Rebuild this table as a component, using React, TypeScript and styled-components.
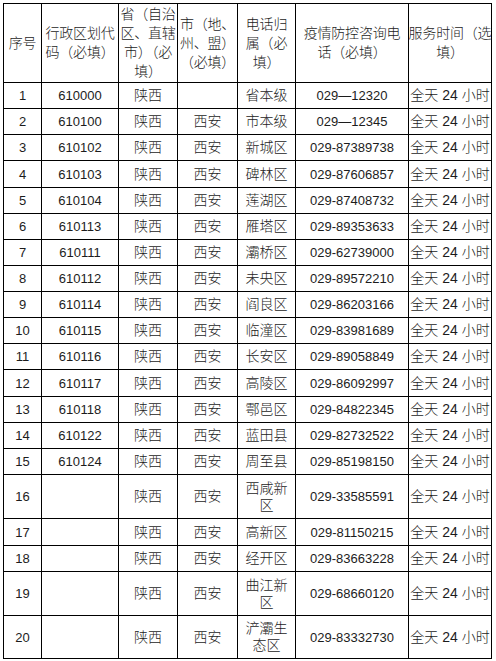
import React from 'react';
import styled, { createGlobalStyle } from 'styled-components';

const GlobalStyle = createGlobalStyle`
  html, body {
    margin: 0;
    padding: 0;
    background: #fff;
  }
  body {
    font-family: "Liberation Sans", "Noto Sans CJK SC", sans-serif;
    font-weight: 300;
    color: #1c1c1c;
  }
`;

// content widths of the seven columns, lines are the 1px gaps
const COLS = [37, 76, 58, 59, 57, 112, 82];

type Row = {
  no: number;
  code: string;
  province: string;
  city: string;
  area: string[];
  phone: string;
};

const rows: Row[] = [
  { no: 1, code: '610000', province: '陕西', city: '', area: ['省本级'], phone: '029—12320' },
  { no: 2, code: '610100', province: '陕西', city: '西安', area: ['市本级'], phone: '029—12345' },
  { no: 3, code: '610102', province: '陕西', city: '西安', area: ['新城区'], phone: '029-87389738' },
  { no: 4, code: '610103', province: '陕西', city: '西安', area: ['碑林区'], phone: '029-87606857' },
  { no: 5, code: '610104', province: '陕西', city: '西安', area: ['莲湖区'], phone: '029-87408732' },
  { no: 6, code: '610113', province: '陕西', city: '西安', area: ['雁塔区'], phone: '029-89353633' },
  { no: 7, code: '610111', province: '陕西', city: '西安', area: ['灞桥区'], phone: '029-62739000' },
  { no: 8, code: '610112', province: '陕西', city: '西安', area: ['未央区'], phone: '029-89572210' },
  { no: 9, code: '610114', province: '陕西', city: '西安', area: ['阎良区'], phone: '029-86203166' },
  { no: 10, code: '610115', province: '陕西', city: '西安', area: ['临潼区'], phone: '029-83981689' },
  { no: 11, code: '610116', province: '陕西', city: '西安', area: ['长安区'], phone: '029-89058849' },
  { no: 12, code: '610117', province: '陕西', city: '西安', area: ['高陵区'], phone: '029-86092997' },
  { no: 13, code: '610118', province: '陕西', city: '西安', area: ['鄠邑区'], phone: '029-84822345' },
  { no: 14, code: '610122', province: '陕西', city: '西安', area: ['蓝田县'], phone: '029-82732522' },
  { no: 15, code: '610124', province: '陕西', city: '西安', area: ['周至县'], phone: '029-85198150' },
  { no: 16, code: '', province: '陕西', city: '西安', area: ['西咸新', '区'], phone: '029-33585591' },
  { no: 17, code: '', province: '陕西', city: '西安', area: ['高新区'], phone: '029-81150215' },
  { no: 18, code: '', province: '陕西', city: '西安', area: ['经开区'], phone: '029-83663228' },
  { no: 19, code: '', province: '陕西', city: '西安', area: ['曲江新', '区'], phone: '029-68660120' },
  { no: 20, code: '', province: '陕西', city: '西安', area: ['浐灞生', '态区'], phone: '029-83332730' },
];

const headers: string[][] = [
  ['序号'],
  ['行政区划代', '码（必填）'],
  ['省（自治', '区、直辖', '市）（必', '填）'],
  ['市（地、', '州、盟）', '（必填）'],
  ['电话归', '属（必', '填）'],
  ['疫情防控咨询电', '话（必填）'],
  ['服务时间（选', '填）'],
];

// row heights measured off the screenshot
const rowHeights = [78, 25, 25, 25, 26, 25, 25, 25, 25, 25, 25, 25, 26, 25, 25, 25, 43, 26, 25, 43, 42];

const Page = styled.div`
  padding: 3px 0 0 3px;
`;

const Table = styled.div<{ $rows: string }>`
  display: grid;
  grid-template-columns: ${COLS.map((w) => `${w}px`).join(' ')};
  grid-template-rows: ${(p) => p.$rows};
  gap: 1px;
  padding: 1px;
  width: max-content;
  background: #000;
`;

const Cell = styled.div<{ $num?: boolean; $head?: boolean }>`
  display: flex;
  flex-direction: column;
  align-items: center;
  justify-content: center;
  background: #fff;
  text-align: center;
  white-space: nowrap;
  font-size: ${(p) => (p.$num ? 13 : 14)}px;
  line-height: ${(p) => (p.$head ? 19 : 17)}px;
  letter-spacing: ${(p) => (p.$head ? '-0.2px' : '0')};
`;

const Line = styled.span`
  display: block;
`;

const Lines = ({ parts }: { parts: string[] }) => (
  <>
    {parts.map((t, i) => (
      <Line key={i}>{t}</Line>
    ))}
  </>
);

export default function App() {
  return (
    <Page>
      <GlobalStyle />
      <Table $rows={rowHeights.map((h) => `${h}px`).join(' ')}>
        {headers.map((h, i) => (
          <Cell key={`h${i}`} $head>
            <Lines parts={h} />
          </Cell>
        ))}
        {rows.map((r) => (
          <React.Fragment key={r.no}>
            <Cell $num>{r.no}</Cell>
            <Cell $num>{r.code}</Cell>
            <Cell>{r.province}</Cell>
            <Cell>{r.city}</Cell>
            <Cell>
              <Lines parts={r.area} />
            </Cell>
            <Cell $num>{r.phone}</Cell>
            <Cell>全天 24 小时</Cell>
          </React.Fragment>
        ))}
      </Table>
    </Page>
  );
}
